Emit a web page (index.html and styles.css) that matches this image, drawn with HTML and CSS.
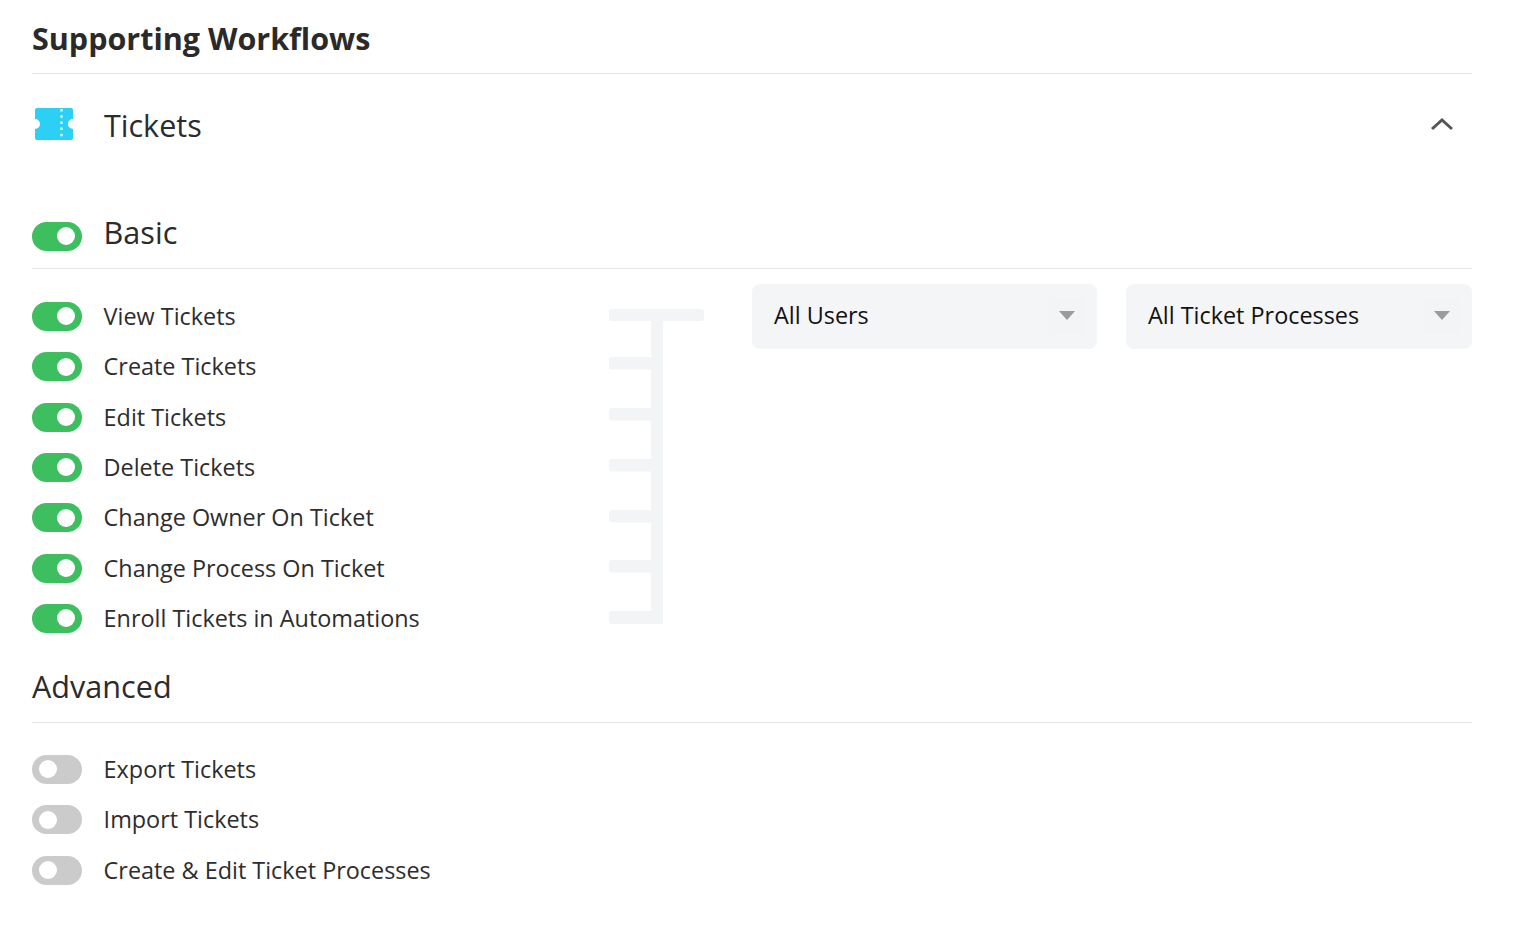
FILE: index.html
```html
<!DOCTYPE html>
<html lang="en">
<head>
<meta charset="utf-8">
<title>Supporting Workflows</title>
<link rel="stylesheet" href="styles.css">
</head>
<body>
<main class="page">
  <h1 class="title">Supporting Workflows</h1>
  <div class="object-head">
    <svg class="ticket-icon" width="38" height="32" viewBox="0 0 38 32"><path d="M2 0H36a2 2 0 0 1 2 2V11a5 5 0 0 0 0 10V30a2 2 0 0 1-2 2H2a2 2 0 0 1-2-2V21a5 5 0 0 0 0-10V2a2 2 0 0 1 2-2Z" fill="#2bd0f4"/><path d="M26.500 1V31" stroke="#fff" stroke-width="2.200" stroke-dasharray="2.500 3.700" fill="none"/></svg>
    <span class="object-name">Tickets</span>
    <svg class="chevron" width="24" height="14" viewBox="0 0 24 14"><path d="M2 12L12 3L22 12" fill="none" stroke="#555" stroke-width="3"/></svg>
  </div>
  <div class="section-head basic-head">
    <span class="toggle on"></span>
    <h2 class="section-name">Basic</h2>
  </div>
  <div class="basic-body">
    <ul class="perm-list">
      <li class="perm"><span class="toggle on"></span>View Tickets</li>
      <li class="perm"><span class="toggle on"></span>Create Tickets</li>
      <li class="perm"><span class="toggle on"></span>Edit Tickets</li>
      <li class="perm"><span class="toggle on"></span>Delete Tickets</li>
      <li class="perm"><span class="toggle on"></span>Change Owner On Ticket</li>
      <li class="perm"><span class="toggle on"></span>Change Process On Ticket</li>
      <li class="perm"><span class="toggle on"></span>Enroll Tickets in Automations</li>
    </ul>
    <svg class="tree" width="95" height="315" viewBox="0 0 95 315">
      <rect x="0" y="0" width="95" height="12" rx="3"/>
      <rect x="42" y="0" width="12" height="315"/>
      <rect x="0" y="48" width="54" height="12.500" rx="3"/>
      <rect x="0" y="99" width="54" height="12.500" rx="3"/>
      <rect x="0" y="150" width="54" height="12.500" rx="3"/>
      <rect x="0" y="201" width="54" height="12.500" rx="3"/>
      <rect x="0" y="251" width="54" height="12.500" rx="3"/>
      <rect x="0" y="302" width="54" height="13" rx="3"/>
    </svg>
    <div class="select first"><span class="select-label">All Users</span><span class="caret-box"><span class="caret"></span></span></div>
    <div class="select"><span class="select-label">All Ticket Processes</span><span class="caret-box"><span class="caret"></span></span></div>
  </div>
  <div class="section-head advanced-head">
    <h2 class="section-name">Advanced</h2>
  </div>
  <ul class="perm-list advanced-list">
    <li class="perm"><span class="toggle"></span>Export Tickets</li>
    <li class="perm"><span class="toggle"></span>Import Tickets</li>
    <li class="perm"><span class="toggle"></span>Create &amp; Edit Ticket Processes</li>
  </ul>
</main>
</body>
</html>
```
FILE: styles.css
```css
* { box-sizing: border-box; }
html, body { margin: 0; padding: 0; background: #fff; }
body { font-family: "Open Sans", "Noto Sans", sans-serif; color: #2b2b2b; overflow: hidden; }
.page { width: 1440px; height: 938px; margin-left: 32px; }
.title { margin: 0; height: 74px; padding-top: 18px; font-size: 30.500px; line-height: 41px; font-weight: 700; color: #2a2a2a; border-bottom: 1px solid #e6e6e6; }
.object-head { display: flex; align-items: center; height: 104px; padding-left: 3px; }
.ticket-icon { flex: none; margin-top: -4px; }
.object-name { margin-left: 31px; margin-top: -2px; font-size: 30.500px; line-height: 44px; }
.chevron { margin-left: auto; margin-right: 18px; margin-top: -4px; }
.section-head { display: flex; align-items: center; border-bottom: 1px solid #e6e6e6; }
.basic-head { height: 91px; padding-top: 22px; }
.section-name { margin: 0; font-size: 30.600px; line-height: 44px; font-weight: 400; }
.basic-head .section-name { margin-left: 21.600px; margin-top: -5px; }
.basic-head .toggle { margin-top: 4px; }
.basic-body { display: flex; align-items: flex-start; height: 381px; }
.perm-list { list-style: none; margin: 0; padding: 0; }
.basic-body .perm-list { width: 577px; flex: none; padding-top: 22px; }
.perm { display: flex; align-items: center; height: 50.350px; padding-bottom: 0.400px; font-size: 23.400px; color: #2d2d2d; }
.perm .toggle { margin-right: 21.600px; margin-top: 0.800px; }
.toggle { position: relative; flex: none; display: block; width: 50px; height: 29px; border-radius: 15px; background: #cbcbcb; }
.toggle::after { content: ""; position: absolute; left: 6.500px; top: 5.500px; width: 18px; height: 18px; border-radius: 50%; background: #fff; }
.toggle.on { background: #3dbf5f; }
.toggle.on::after { left: 25px; }
.tree { flex: none; margin-top: 40px; fill: #f3f4f6; }
.select { flex: none; display: flex; align-items: center; justify-content: space-between; width: 346px; height: 65px; margin-top: 15px; margin-left: 29px; padding: 0 12px 2px 22px; background: #f4f5f7; border-radius: 8px; font-size: 23.400px; line-height: 30px; color: #111; }
.select.first { width: 345px; margin-left: 48px; }
.select-label { margin-bottom: 2px; }
.caret-box { display: flex; align-items: center; justify-content: center; width: 36px; height: 36px; background: #f3f4f5; }
.caret { display: block; width: 0; height: 0; border-left: 8.500px solid transparent; border-right: 8.500px solid transparent; border-top: 9px solid #9b9b9b; }
.advanced-head { height: 73px; }
.advanced-head .section-name { margin-top: -1px; }
.advanced-list { padding-top: 21px; }
```
